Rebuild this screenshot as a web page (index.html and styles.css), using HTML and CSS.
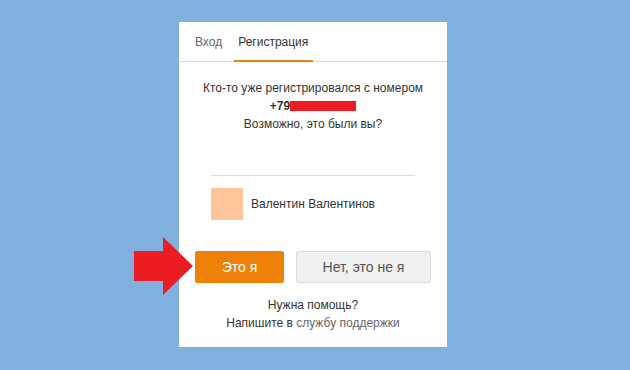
FILE: index.html
```html
<!DOCTYPE html>
<html lang="ru">
<head>
<meta charset="utf-8">
<link rel="stylesheet" href="styles.css">
</head>
<body>
<div class="card">
  <div class="tabs">
    <span class="tab">Вход</span>
    <span class="tab active">Регистрация</span>
  </div>
  <div class="body">
    <p class="msg">Кто-то уже регистрировался с номером<br><b>+79</b><span class="redact"></span><br>Возможно, это были вы?</p>
    <div class="sep"></div>
    <div class="user">
      <div class="avatar"></div>
      <span class="name">Валентин Валентинов</span>
    </div>
  </div>
  <div class="actions">
    <button class="btn primary">Это я</button>
    <button class="btn secondary">Нет, это не я</button>
  </div>
  <p class="help">Нужна помощь?<br>Напишите в <span class="link">службу поддержки</span></p>
</div>
<svg class="arrow" width="60" height="60" viewBox="0 0 60 60"><polygon points="0,15 29,15 29,1 59,30 29,59 29,45 0,45" fill="#ed1c24"/></svg>
</body>
</html>
```
FILE: styles.css
```css
html, body { margin: 0; padding: 0; }
body {
  background: #82b0de;
  font-family: "Liberation Sans", Arial, sans-serif;
  font-size: 12px;
  color: #333;
  width: 630px;
  height: 370px;
  overflow: hidden;
  position: relative;
}
.card {
  margin: 22px 0 0 179px;
  width: 268px;
  height: 325px;
  background: #fff;
  box-sizing: border-box;
}
.tabs {
  height: 39px;
  border-bottom: 1px solid #dcdcdc;
  display: flex;
  align-items: stretch;
  padding-left: 12px;
  gap: 8px;
}
.tab {
  padding: 0 4px;
  line-height: 40px;
  color: #666;
  font-size: 12px;
}
.tab.active {
  color: #333;
  box-shadow: inset 0 -2px 0 #ee8208;
  height: 40px;
  padding: 0 5px 0 4px;
}
.body { padding: 0 32px; }
.msg {
  margin: 17px -32px 0;
  text-align: center;
  line-height: 18px;
  white-space: nowrap;
}
.msg b { font-weight: bold; }
.redact {
  display: inline-block;
  width: 66px;
  height: 10px;
  background: #ed1c24;
  vertical-align: -1px;
}
.sep {
  margin-top: 42px;
  height: 1px;
  background: #dcdcdc;
}
.user {
  margin-top: 12px;
  display: flex;
  align-items: center;
  gap: 8px;
}
.avatar {
  width: 32px;
  height: 32px;
  background: #ffc59b;
}
.actions {
  margin-top: 31px;
  padding: 0 16px;
  display: flex;
  gap: 12px;
}
.btn {
  height: 32px;
  border-radius: 2px;
  font-family: "Liberation Sans", Arial, sans-serif;
  font-size: 14px;
  padding: 0;
  box-sizing: border-box;
}
.primary {
  width: 89px;
  background: #ee8208;
  border: 1px solid #ee8208;
  color: #fff;
}
.secondary {
  width: 135px;
  background: #f0f0f0;
  border: 1px solid #dcdcdc;
  color: #555;
}
.help {
  margin: 13px 0 0;
  text-align: center;
  line-height: 18px;
}
.link { color: #666; }
.arrow {
  position: absolute;
  left: 134px;
  top: 236px;
}
```
